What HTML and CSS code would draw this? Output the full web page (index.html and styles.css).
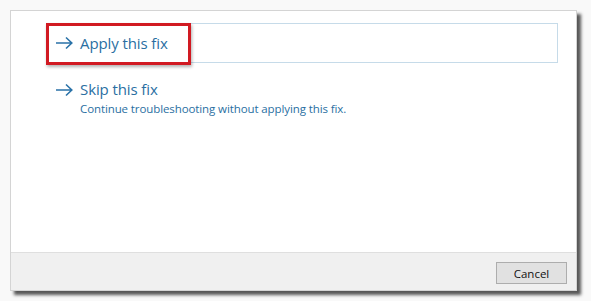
FILE: index.html
```html
<!DOCTYPE html>
<html>
<head>
<meta charset="utf-8">
<link rel="stylesheet" href="styles.css">
</head>
<body>
<div class="window">
  <div class="content">
    <div class="option option-selected">
      <svg class="arrow" width="18" height="14" viewBox="0 0 18 14"><path d="M1 7H17M11 1.5L16.8 7L11 12.5" fill="none" stroke="#2a72a8" stroke-width="1.6"/></svg>
      <div class="texts">
        <div class="title">Apply this fix</div>
      </div>
      <div class="highlight"></div>
    </div>
    <div class="option">
      <svg class="arrow" width="18" height="14" viewBox="0 0 18 14"><path d="M1 7H17M11 1.5L16.8 7L11 12.5" fill="none" stroke="#2a72a8" stroke-width="1.6"/></svg>
      <div class="texts">
        <div class="title">Skip this fix</div>
        <div class="desc">Continue troubleshooting without applying this fix.</div>
      </div>
    </div>
  </div>
  <div class="footer">
    <button class="btn">Cancel</button>
  </div>
</div>
</body>
</html>
```
FILE: styles.css
```css
html, body {
  margin: 0;
  padding: 0;
}
body {
  background: #f9f9f9;
  width: 591px;
  height: 301px;
  overflow: hidden;
  font-family: "Open Sans", "Noto Sans", sans-serif;
}
.window {
  margin: 10px 0 0 10px;
  width: 565px;
  height: 279px;
  border: 1px solid #d4d4d4;
  background: #fff;
  display: flex;
  flex-direction: column;
  box-shadow: 4px 4px 3px rgba(60, 60, 60, 0.85);
}
.content {
  flex: 1;
  padding: 12px 18px 0 36px;
  display: flex;
  flex-direction: column;
  gap: 16px;
}
.option {
  position: relative;
  display: flex;
  align-items: flex-start;
  padding: 0 0 0 8px;
  color: #2a6fa2;
}
.option-selected {
  height: 38px;
  border: 1px solid #c6dbe9;
  align-items: center;
  padding-left: 7px;
}
.arrow {
  flex: none;
  margin-right: 7px;
}
.option:not(.option-selected) .arrow {
  margin-top: 4px;
}
.title {
  font-size: 15px;
  line-height: 20px;
  letter-spacing: -0.1px;
}
.desc {
  font-size: 11.5px;
  line-height: 17px;
  margin-top: 1px;
  letter-spacing: -0.1px;
}
.highlight {
  position: absolute;
  left: -2px;
  top: -1px;
  width: 139px;
  height: 36px;
  border: 3px solid #d11a22;
  box-shadow: 1px 2px 3px rgba(0, 0, 0, 0.3);
}
.footer {
  flex: none;
  background: #f0f0f0;
  border-top: 1px solid #dfdfdf;
  display: flex;
  justify-content: flex-end;
  align-items: flex-start;
  padding: 9px 9px 0 0;
  box-sizing: border-box;
  height: 38px;
}
.btn {
  width: 71px;
  height: 22px;
  border: 1px solid #adadad;
  background: #e1e1e1;
  font-family: "Open Sans", "Noto Sans", sans-serif;
  font-size: 11.5px;
  color: #111;
  padding: 0;
}
```
